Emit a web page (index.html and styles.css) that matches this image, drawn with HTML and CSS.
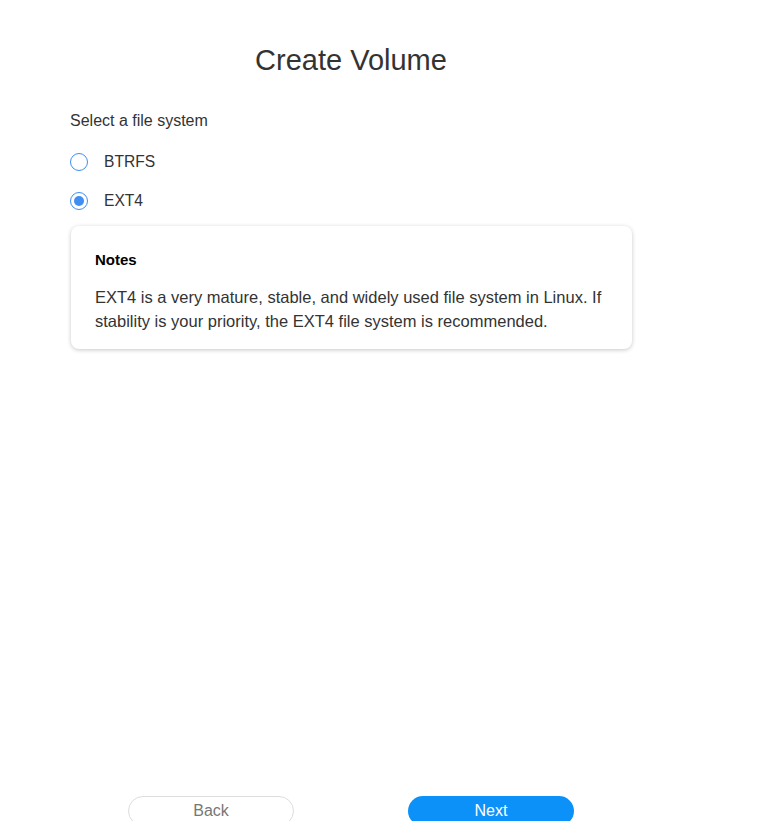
FILE: index.html
```html
<!DOCTYPE html>
<html lang="en">
<head>
    <meta charset="UTF-8" />
    <meta name="viewport" content="width=device-width, initial-scale=1.0"/>
    <title>Create Volume</title>
    <link rel="stylesheet" href="styles.css">
</head>
<body>
    <div class="page">
        <main class="content">
            <h1 class="title">Create Volume</h1>
            <p class="field-label">Select a file system</p>
            <div class="radio-group">
                <label class="radio">
                    <input type="radio" name="fs" value="btrfs">
                    <span class="radio-mark"></span>
                    <span class="radio-text">BTRFS</span>
                </label>
                <label class="radio">
                    <input type="radio" name="fs" value="ext4" checked>
                    <span class="radio-mark"></span>
                    <span class="radio-text">EXT4</span>
                </label>
            </div>
            <section class="notes">
                <h2 class="notes-title">Notes</h2>
                <p class="notes-text">EXT4 is a very mature, stable, and widely used file system in Linux. If stability is your priority, the EXT4 file system is recommended.</p>
            </section>
        </main>
        <footer class="actions">
            <button class="btn btn-back">Back</button>
            <button class="btn btn-next">Next</button>
        </footer>
    </div>
</body>
</html>
```

FILE: styles.css
```css
:root {
    --primary-color: #0b91f7;
    --radio-color: #3f8ef3;
    --text-color: #333;
}
body {
    margin: 0;
    font-family: 'Liberation Sans', Arial, sans-serif;
    color: var(--text-color);
    background-color: #fff;
}
.page {
    width: 702px;
    min-height: 832px;
    display: flex;
    flex-direction: column;
}
.content {
    flex: 1;
    padding: 42px 70px 0 70px;
}
.title {
    margin: 0 0 33px;
    text-align: center;
    font-size: 29px;
    font-weight: 400;
    line-height: 36px;
    color: #333;
}
.field-label {
    margin: 0 0 20px;
    font-size: 16px;
    line-height: 20px;
}
.radio-group {
    display: flex;
    flex-direction: column;
    gap: 17px;
}
.radio {
    display: flex;
    align-items: center;
    height: 22px;
    font-size: 15.6px;
    cursor: pointer;
}
.radio input { display: none; }
.radio-mark {
    width: 16px;
    height: 16px;
    border: 1px solid var(--radio-color);
    border-radius: 50%;
    margin-right: 16px;
    display: flex;
    align-items: center;
    justify-content: center;
}
.radio input:checked + .radio-mark::after {
    content: '';
    width: 10px;
    height: 10px;
    border-radius: 50%;
    background-color: var(--radio-color);
}
.notes {
    margin: 14px 0 0 1px;
    padding: 22px 24px 16px;
    border-radius: 8px;
    box-shadow: 0 1px 4px rgba(0,0,0,0.22);
}
.notes-title {
    margin: 0 0 13px;
    font-size: 15px;
    line-height: 24px;
    font-weight: 700;
    color: #000;
}
.notes-text {
    margin: 0;
    font-size: 16.5px;
    line-height: 24px;
}
.actions {
    display: flex;
    justify-content: center;
    gap: 114px;
    padding-bottom: 6px;
}
.btn {
    width: 166px;
    height: 30px;
    border-radius: 15px;
    font-family: inherit;
    font-size: 16px;
    cursor: pointer;
}
.btn-back {
    background-color: #fff;
    border: 1px solid #ddd;
    color: #777;
}
.btn-next {
    background-color: var(--primary-color);
    border: none;
    color: #fff;
}
```
